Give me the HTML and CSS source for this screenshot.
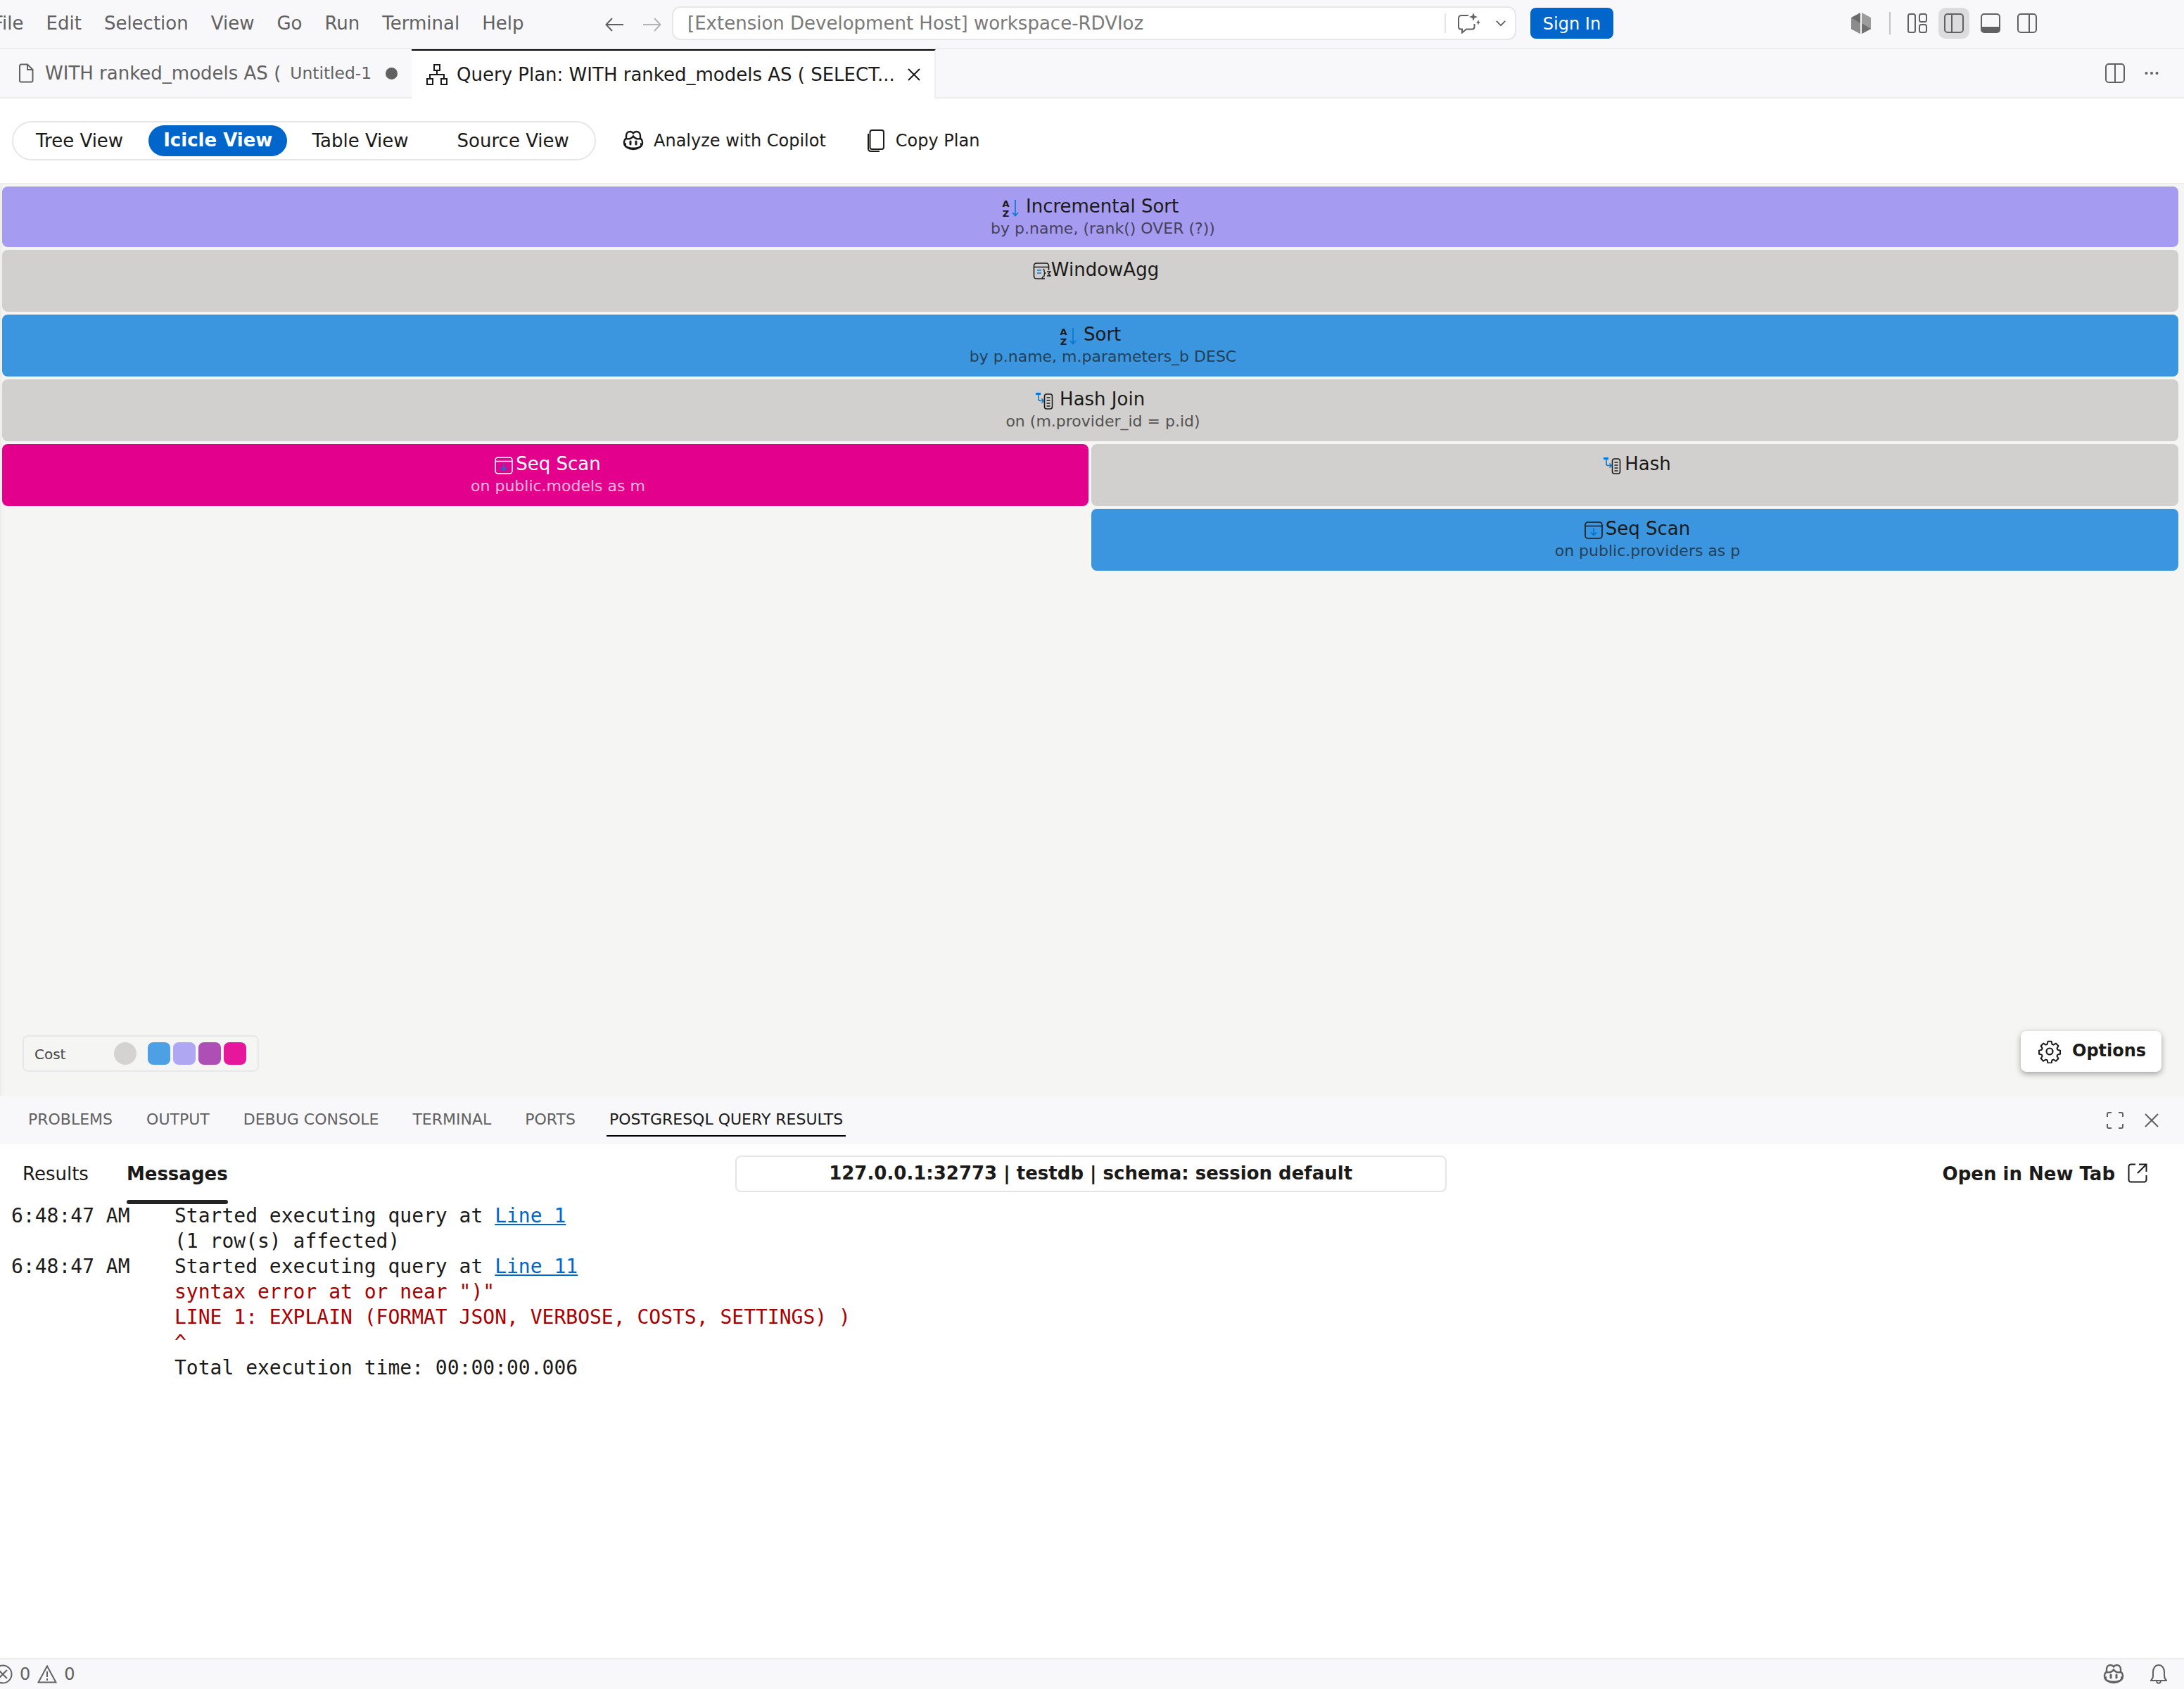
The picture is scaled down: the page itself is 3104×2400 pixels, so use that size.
FILE: index.html
```html
<!DOCTYPE html>
<html lang="en">
<head>
<meta charset="utf-8">
<title>Query Plan</title>
<link rel="stylesheet" href="styles.css">
</head>
<body>
<svg class="defs" width="0" height="0" aria-hidden="true">
  <symbol id="copilot" viewBox="0 0 32 32">
    <path d="M3 19c0-3 1.500-5.500 3-6.500V9c0-3.500 2.500-6 5.500-6 2 0 3.500.8 4.500 2.300C17 3.800 18.500 3 20.500 3 23.500 3 26 5.500 26 9v3.500c1.500 1 3 3.500 3 6.500 0 5.500-6.500 9-13 9S3 24.500 3 19z" fill="none" stroke="currentColor" stroke-width="2.400"/>
    <path d="M6 13c3 .8 7 .6 10-3.500 3 4.100 7 4.300 10 3.500" fill="none" stroke="currentColor" stroke-width="2.400"/>
    <path d="M3 20c0 5 6.500 8 13 8s13-3 13-8l-3-1v4c-3 2-6 2.500-10 2.500S9 25 6 23v-4z" fill="currentColor"/>
    <path d="M12 17v4M20 17v4" stroke="currentColor" stroke-width="3" stroke-linecap="round"/>
  </symbol>
  <symbol id="sort" viewBox="0 0 26 26">
    <text x="5.500" y="11" class="az">A</text>
    <text x="5.500" y="24.500" class="az">Z</text>
    <path d="M19 1v22M15 19l4 4.500 4-4.500" fill="none" stroke="#0078d4" stroke-width="1.600"/>
  </symbol>
  <symbol id="hashicon" viewBox="0 0 26 26">
    <rect x="12.500" y="3" width="11" height="21" rx="3" fill="none" stroke="currentColor" stroke-width="1.600"/>
    <path d="M15.500 8h5M15.500 12h5M15.500 16h5M15.500 20h5" stroke="currentColor" stroke-width="1.500"/>
    <path d="M0 2.500h7" stroke="#0078d4" stroke-width="3"/>
    <path d="M4 4v6c0 1.500 1 2.500 2.500 2.500h5M8.500 9.500l3 3-3 3" fill="none" stroke="#0078d4" stroke-width="1.600"/>
  </symbol>
  <symbol id="scan" viewBox="0 0 26 26">
    <rect x="1" y="1" width="24" height="23" rx="4" fill="none" stroke="currentColor" stroke-width="1.600"/>
    <path d="M1 6.500h24" stroke="currentColor" stroke-width="1.600"/>
    <path d="M13 9.500v10M9 15.500l4 4 4-4" fill="none" stroke="#0078d4" stroke-width="1.800"/>
  </symbol>
  <symbol id="agg" viewBox="0 0 26 26">
    <path d="M17 23H5a3.500 3.500 0 0 1-3.500-3.500v-15A3.500 3.500 0 0 1 5 1h14a3.500 3.500 0 0 1 3.500 3.500V11" fill="none" stroke="currentColor" stroke-width="1.600"/>
    <path d="M1.500 6.500h21" stroke="currentColor" stroke-width="1.600"/>
    <path d="M6 11h6M6 15h6" stroke="#0078d4" stroke-width="1.600"/>
    <path d="M14.500 9.500c2 0 1.500 1.500 1.500 3s.5 2 1.500 2.500c-1 .5-1.500 1-1.500 2.500s.5 3-1.500 3-1 2 0 3" fill="none" stroke="currentColor" stroke-width="1.400"/>
    <path d="M20 13h5l-3 3 3 3h-5" fill="none" stroke="currentColor" stroke-width="1.500"/>
  </symbol>
</svg>

<header class="titlebar">
  <nav class="menu">
    <span class="menu-first">File</span><span>Edit</span><span>Selection</span><span>View</span><span>Go</span><span>Run</span><span>Terminal</span><span>Help</span>
  </nav>
  <div class="nav-arrows">
    <svg class="ic28" viewBox="0 0 28 28"><path d="M26 14H2M10 5l-8.500 9 8.500 9" class="st2"/></svg>
    <svg class="ic28 faint" viewBox="0 0 28 28"><path d="M2 14h24M18 5l8.500 9-8.500 9" class="st2"/></svg>
  </div>
  <div class="command">
    <span class="command-text">[Extension Development Host] workspace-RDVIoz</span>
    <span class="command-sep"></span>
    <svg class="chat" viewBox="0 0 34 30"><path d="M17 4H7C4.800 4 3 5.800 3 8v12c0 2 1.500 3.500 3.500 3.500H8v5l6-5h8c2 0 3.500-1.500 3.500-3.500v-4" class="st2"/><path d="M24 0l1.600 4.400L30 6l-4.400 1.600L24 12l-1.600-4.400L18 6l4.400-1.600zM31 10l1 2.800 2 1-2 1-1 2.800-1-2.800-2-1 2-1z" fill="#616161"/></svg>
    <svg class="chev" viewBox="0 0 18 12"><path d="M2 2l7 7 7-7" class="st2"/></svg>
  </div>
  <button class="signin">Sign In</button>
  <div class="layout-icons">
    <svg class="hex" viewBox="0 0 28 30"><path d="M13 0v30L0 23V7z" fill="#6a6a6a"/><path d="M15 0l13 7v16l-13 7z" fill="#9c9c9c"/><path d="M15 15l13 8-13 7z" fill="#707070"/><path d="M13 15L0 7v16l13 7z" fill="#8c8c8c"/></svg>
    <span class="vsep"></span>
    <svg class="lay" viewBox="0 0 28 28"><rect x="1" y="1" width="10" height="26" rx="2.500" class="st2"/><rect x="17" y="1" width="10" height="11" rx="2.500" class="st2"/><rect x="17" y="16" width="10" height="11" rx="2.500" class="st2"/></svg>
    <span class="lay-active"><svg class="lay" viewBox="0 0 28 28"><rect x="1" y="1" width="26" height="26" rx="4" class="st2"/><path d="M11 1v26" class="st2"/></svg></span>
    <svg class="lay" viewBox="0 0 28 28"><rect x="1" y="1" width="26" height="26" rx="4" class="st2"/><path d="M1 19h26v4a4 4 0 0 1-4 4H5a4 4 0 0 1-4-4z" fill="#616161"/></svg>
    <svg class="lay" viewBox="0 0 28 28"><rect x="1" y="1" width="26" height="26" rx="4" class="st2"/><path d="M17 1v26" class="st2"/></svg>
  </div>
</header>

<div class="tabs">
  <div class="tab">
    <svg class="tab-file" viewBox="0 0 22 28"><path d="M2 3.500A2 2 0 0 1 4 1.500h9l7.500 7.500v15.500a2 2 0 0 1-2 2H4a2 2 0 0 1-2-2zM13 1.500V9h7.500" class="st2"/></svg>
    <span class="tab-name">WITH ranked_models AS (</span>
    <span class="tab-desc">Untitled-1</span>
    <span class="tab-dot"></span>
  </div>
  <div class="tab tab-on">
    <svg class="tab-plan" viewBox="0 0 30 30"><path d="M11 1h8v8h-8zM1 21h8v8H1zM21 21h8v8h-8zM15 9v6M5 21v-6h20v6" class="st2d"/></svg>
    <span class="tab-name">Query Plan: WITH ranked_models AS ( SELECT...</span>
    <svg class="tab-x" viewBox="0 0 20 20"><path d="M2 2l16 16M18 2L2 18" class="st2d"/></svg>
  </div>
  <div class="tab-actions">
    <svg class="lay" viewBox="0 0 28 28"><rect x="1" y="1" width="26" height="26" rx="4" class="st2"/><path d="M14 1v26" class="st2"/></svg>
    <svg class="more" viewBox="0 0 20 6"><circle cx="2.500" cy="3" r="2" fill="#616161"/><circle cx="10" cy="3" r="2" fill="#616161"/><circle cx="17.500" cy="3" r="2" fill="#616161"/></svg>
  </div>
</div>

<section class="toolbar">
  <div class="views">
    <span class="view v-tree">Tree View</span>
    <span class="view v-on">Icicle View</span>
    <span class="view v-table">Table View</span>
    <span class="view v-source">Source View</span>
  </div>
  <span class="tool tool-copilot"><svg class="tool-ic"><use href="#copilot"/></svg>Analyze with Copilot</span>
  <span class="tool tool-copy"><svg class="copy-ic" viewBox="0 0 24 32"><rect x="3.500" y="1" width="19.500" height="27" rx="3" fill="none" stroke="#1b1a19" stroke-width="2"/><path d="M1 6v21c0 2.500 1.500 4 4 4h12" fill="none" stroke="#1b1a19" stroke-width="2"/></svg>Copy Plan</span>
</section>

<main class="plan">
  <div class="rows">
    <div class="node n-purple"><div class="t"><svg class="ni"><use href="#sort"/></svg> Incremental Sort</div><div class="s">by p.name, (rank() OVER (?))</div></div>
    <div class="node n-gray"><div class="t t-agg"><svg class="ni"><use href="#agg"/></svg>WindowAgg</div></div>
    <div class="node n-blue"><div class="t"><svg class="ni"><use href="#sort"/></svg> Sort</div><div class="s">by p.name, m.parameters_b DESC</div></div>
    <div class="node n-gray"><div class="t"><svg class="ni"><use href="#hashicon"/></svg> Hash Join</div><div class="s">on (m.provider_id = p.id)</div></div>
    <div class="split">
      <div class="node n-pink"><div class="t t-tight"><svg class="ni"><use href="#scan"/></svg>Seq Scan</div><div class="s">on public.models as m</div></div>
      <div class="split-col">
        <div class="node n-gray"><div class="t t-tight"><svg class="ni"><use href="#hashicon"/></svg>Hash</div></div>
        <div class="node n-blue"><div class="t t-tight"><svg class="ni"><use href="#scan"/></svg>Seq Scan</div><div class="s">on public.providers as p</div></div>
      </div>
    </div>
  </div>
  <div class="plan-foot">
    <div class="legend">
      <span class="legend-label">Cost</span>
      <span class="sw sw-gray"></span>
      <span class="sw-group"><span class="sw sw-blue"></span><span class="sw sw-lav"></span><span class="sw sw-pur"></span><span class="sw sw-pink"></span></span>
    </div>
    <button class="options">
      <svg class="gear" viewBox="0 0 32 34"><path d="M13.200 1.500h5.600l.9 4.300 2.300 1 3.800-2.300 3.900 4-2.300 3.700 1 2.300 4.100 1v5.600l-4.100 1-1 2.300 2.300 3.700-3.900 4-3.800-2.300-2.300 1-.9 4.300h-5.600l-.9-4.300-2.300-1-3.800 2.300-3.900-4 2.300-3.700-1-2.300-4.100-1V15.500l4.100-1 1-2.300-2.300-3.700 3.900-4 3.800 2.300 2.300-1z" transform="translate(1.500 1.500) scale(.91)" fill="none" stroke="#1b1a19" stroke-width="2.200" stroke-linejoin="round"/><circle cx="16" cy="17" r="4.500" fill="none" stroke="#1b1a19" stroke-width="2.200"/></svg>
      <span class="options-label">Options</span>
    </button>
  </div>
</main>

<section class="panel">
  <div class="panel-head">
    <span class="ptab">PROBLEMS</span>
    <span class="ptab">OUTPUT</span>
    <span class="ptab">DEBUG CONSOLE</span>
    <span class="ptab">TERMINAL</span>
    <span class="ptab">PORTS</span>
    <span class="ptab ptab-on">POSTGRESQL QUERY RESULTS</span>
    <span class="panel-actions">
      <svg class="p-ic" viewBox="0 0 24 24"><path d="M1 7V3a2 2 0 0 1 2-2h4M17 1h4a2 2 0 0 1 2 2v4M23 17v4a2 2 0 0 1-2 2h-4M7 23H3a2 2 0 0 1-2-2v-4" class="st2"/></svg>
      <svg class="p-x" viewBox="0 0 20 20"><path d="M1 1l18 18M19 1L1 19" class="st2"/></svg>
    </span>
  </div>
  <div class="results-head">
    <span class="rtab">Results</span>
    <span class="rtab rtab-on">Messages</span>
    <span class="conn">127.0.0.1:32773 | testdb | schema: session default</span>
    <span class="newtab">Open in New Tab
      <svg class="ext" viewBox="0 0 28 28"><path d="M11 1.500H4.500a3 3 0 0 0-3 3v19a3 3 0 0 0 3 3h19a3 3 0 0 0 3-3V17M16 1.500h10.500V12M26.500 1.500L14 14" fill="none" stroke="#1b1a19" stroke-width="2"/></svg>
    </span>
  </div>
  <div class="msgs">
    <div class="msg"><span class="time">6:48:47 AM</span><span>Started executing query at <a class="lnk">Line 1</a></span></div>
    <div class="msg"><span class="time"></span><span>(1 row(s) affected)</span></div>
    <div class="msg"><span class="time">6:48:47 AM</span><span>Started executing query at <a class="lnk">Line 11</a></span></div>
    <div class="msg err"><span class="time"></span><span>syntax error at or near ")"</span></div>
    <div class="msg err"><span class="time"></span><span>LINE 1: EXPLAIN (FORMAT JSON, VERBOSE, COSTS, SETTINGS) )</span></div>
    <div class="msg err"><span class="time"></span><span>^</span></div>
    <div class="msg"><span class="time"></span><span>Total execution time: 00:00:00.006</span></div>
  </div>
</section>

<footer class="status">
  <svg class="st-err" viewBox="0 0 28 28"><circle cx="14" cy="14" r="12.500" class="st2"/><path d="M8 8l12 12M20 8L8 20" class="st2"/></svg>
  <span class="st-n">0</span>
  <svg class="st-warn" viewBox="0 0 28 26"><path d="M14 1.500L1.500 24.500h25zM14 9v8M14 19v3" class="st2"/></svg>
  <span class="st-n">0</span>
  <span class="status-right">
    <svg class="st-copilot"><use href="#copilot"/></svg>
    <svg class="st-bell" viewBox="0 0 24 28"><path d="M1 23c2-2 3-3.500 3-7v-5C4 5 7.500 1 12 1s8 4 8 10v5c0 3.500 1 5 3 7zM9 23c0 5 6 5 6 0" class="st2"/></svg>
  </span>
</footer>
</body>
</html>
```
FILE: styles.css
```css
* { box-sizing: border-box; }
html, body { margin: 0; padding: 0; }
body {
  width: 3104px;
  height: 2400px;
  display: flex;
  flex-direction: column;
  overflow: hidden;
  font-family: "DejaVu Sans", sans-serif;
  font-size: 26px;
  color: #1b1a19;
  background: #fff;
}
.defs { position: absolute; }
svg { flex: none; display: block; }
.st2 { fill: none; stroke: #616161; stroke-width: 2; }
.st2d { fill: none; stroke: #1b1a19; stroke-width: 2; }
.az { font: 700 13px "DejaVu Sans", sans-serif; fill: #1b1a19; text-anchor: middle; }

/* title bar */
.titlebar {
  flex: none;
  height: 70px;
  display: flex;
  align-items: center;
  background: #f8f8fb;
  border-bottom: 2px solid #eeeeef;
  overflow: hidden;
  padding-bottom: 2px;
}
.menu { width: 870px; flex: none; display: flex; gap: 32px; color: #616161; font-size: 26px; white-space: nowrap; margin-left: -10px; }
.nav-arrows { display: flex; gap: 24px; width: 95px; margin-top: 4px; }
.ic28 { width: 28px; height: 28px; }
.faint { opacity: .45; }
.command {
  flex: none;
  width: 1200px;
  height: 48px;
  background: #fff;
  border: 2px solid #e7e7e7;
  border-radius: 12px;
  display: flex;
  align-items: center;
  padding-left: 20px;
}
.command-text { flex: 1; color: #7a7a7a; white-space: nowrap; }
.command-sep { width: 2px; height: 28px; background: #e5e5e5; }
.chat { width: 34px; height: 30px; margin-left: 15px; }
.chev { width: 16px; height: 11px; margin-left: 21px; margin-right: 12px; }
.signin {
  flex: none;
  margin-left: 20px;
  width: 118px;
  height: 44px;
  border: 0;
  border-radius: 8px;
  background: #0066cc;
  color: #fff;
  font: 400 24px "DejaVu Sans", sans-serif;
  padding: 2px 0 0;
}
.layout-icons { margin-left: 338px; display: flex; align-items: center; }
.hex { width: 28px; height: 30px; }
.vsep { width: 2px; height: 32px; background: #c4c4c4; margin: 0 24px 0 26px; }
.lay { width: 28px; height: 28px; }
.lay-active { width: 44px; height: 44px; background: #dcdcde; border-radius: 10px; display: flex; align-items: center; justify-content: center; margin: 0 16px; }
.layout-icons > .lay:last-child { margin-left: 24px; }

/* tabs */
.tabs {
  flex: none;
  height: 70px;
  display: flex;
  background: #f8f8fb;
  border-bottom: 2px solid #eeeeef;
}
.tab { height: 68px; display: flex; align-items: center; white-space: nowrap; color: #616161; font-size: 26px; }
.tab:first-child { width: 585px; padding-left: 26px; }
.tab-file { width: 22px; height: 28px; }
.tab-name { margin-left: 16px; }
.tab-desc { font-size: 23.400px; margin-left: 13px; }
.tab-dot { width: 17px; height: 17px; border-radius: 50%; background: #616161; margin-left: 20px; }
.tab-on {
  width: 745px;
  height: 70px;
  margin-bottom: -2px;
  background: #fff;
  color: #1b1a19;
  border-top: 2px solid #000;
  border-right: 2px solid #eeeeef;
  padding-left: 21px;
}
.tab-plan { width: 30px; height: 30px; }
.tab-on .tab-name { margin-left: 13px; }
.tab-x { width: 20px; height: 20px; margin-left: 17px; }
.tab-actions { margin-left: auto; display: flex; align-items: center; gap: 28px; padding-right: 36px; }
.more { width: 20px; height: 6px; }

/* toolbar */
.toolbar { flex: none; height: 120px; display: flex; align-items: center; padding-left: 17px; background: #fff; font-size: 24px; }
.views {
  width: 830px;
  height: 56px;
  border: 2px solid #e6e6e6;
  border-radius: 28px;
  display: flex;
  align-items: center;
  white-space: nowrap;
}
.view { font-size: 26px; }
.v-tree { margin-left: 32px; }
.v-on { margin-left: 36px; padding: 0 21px; height: 44px; line-height: 42px; background: #0066cc; color: #fff; font-weight: 700; border-radius: 22px; }
.v-table { margin-left: 35px; }
.v-source { margin-left: 69px; }
.tool { display: flex; align-items: center; white-space: nowrap; }
.tool-copilot { margin-left: 37px; }
.tool-ic { width: 32px; height: 32px; margin-right: 13px; color: #1b1a19; }
.tool-copy { margin-left: 59px; }
.copy-ic { width: 24px; height: 32px; margin-right: 16px; }

/* plan */
.plan {
  flex: 1;
  min-height: 0;
  background: #f5f5f3;
  border-top: 2px solid #eeeeee;
  display: flex;
  flex-direction: column;
  box-shadow: inset 6px 0 6px -6px #e4e4e4;
}
.rows { display: flex; flex-direction: column; gap: 4px; padding: 3px 8px 0 3px; }
.node {
  height: 88px;
  border-radius: 8px;
  text-align: center;
  padding-top: 11px;
  line-height: 34px;
  font-size: 26px;
  overflow: hidden;
}
.rows > .node:first-child { height: 86px; }
.t { display: flex; justify-content: center; align-items: center; height: 34px; white-space: pre; }
.t-agg { padding-left: 16px; }
.t-tight { padding-left: 7px; }
.t-tight .ni { margin-right: 4px; }
.ni { width: 26px; height: 26px; margin-top: 5px; }
.s { font-size: 22px; line-height: 28px; margin-top: 1px; padding-left: 36px; opacity: .7; }
.n-purple { background: #a59bf0; }
.n-gray { background: #d1d0ce; }
.n-blue { background: #3b96df; }
.n-pink { background: #e3008c; color: #fff; }
.split { display: grid; grid-template-columns: 1544px 1fr; gap: 4px; }
.split-col { display: flex; flex-direction: column; gap: 4px; }
.split > .node { align-self: start; }
.plan-foot { margin-top: auto; display: flex; align-items: flex-end; justify-content: space-between; padding: 0 32px 34px 32px; }
.legend {
  width: 336px;
  height: 52px;
  border: 2px solid #e8e8ea;
  border-radius: 8px;
  background: #f5f5f3;
  display: flex;
  align-items: center;
  font-size: 20px;
  padding-left: 15px;
}
.legend-label { width: 113px; color: #444; padding-top: 2px; }
.sw { width: 32px; height: 32px; border-radius: 8px; display: block; }
.sw-gray { background: #d4d3d1; border-radius: 50%; }
.sw-group { display: flex; gap: 4px; margin-left: 16px; }
.sw-blue { background: #4ea0e4; }
.sw-lav { background: #b0a7f3; }
.sw-pur { background: #ad4fb5; }
.sw-pink { background: #e6179a; }
.options {
  width: 200px;
  height: 58px;
  border: 0;
  border-radius: 8px;
  background: #fff;
  box-shadow: 0 3px 8px rgba(0, 0, 0, .35);
  display: flex;
  align-items: center;
  padding: 0 0 0 25px;
  font: 700 24px "DejaVu Sans", sans-serif;
  color: #1b1a19;
  gap: 16px;
}
.options-label { margin-bottom: 3px; }
.gear { width: 32px; height: 34px; }

/* panel */
.panel { flex: none; height: 799px; display: flex; flex-direction: column; background: #fff; }
.panel-head {
  flex: none;
  height: 69px;
  background: #f8f8fb;
  display: flex;
  align-items: flex-start;
  padding-left: 36px;
  font-size: 22px;
  color: #616161;
  gap: 40px;
}
.ptab { height: 58px; padding: 20px 4px 0; line-height: 28px; white-space: nowrap; }
.ptab-on { color: #1b1a19; border-bottom: 2px solid #000; }
.panel-actions { margin-left: auto; display: flex; align-items: center; gap: 30px; padding: 23px 36px 0 0; }
.p-ic { width: 24px; height: 24px; }
.p-x { width: 20px; height: 20px; }
.results-head { flex: none; height: 84px; display: flex; align-items: flex-start; }
.rtab { margin-top: 26px; line-height: 32px; }
.rtab:first-child { margin-left: 32px; }
.rtab-on { margin-left: 54px; font-weight: 700; height: 58px; position: relative; }
.rtab-on::after { content: ""; position: absolute; left: 0; right: 0; bottom: -1px; height: 6px; border-radius: 3px; background: #242424; }
.conn {
  width: 1011px;
  height: 52px;
  margin: 16px 0 0 721px;
  border: 2px solid #e5e5e5;
  border-radius: 8px;
  text-align: center;
  line-height: 46px;
  font-weight: 700;
}
.newtab { margin-left: auto; padding: 26px 52px 0 0; display: flex; align-items: center; font-weight: 700; gap: 18px; line-height: 32px; }
.ext { width: 28px; height: 28px; margin-top: -3px; }
.msgs { flex: 1; padding: 0 0 0 16px; font-family: "DejaVu Sans Mono", monospace; font-size: 28px; line-height: 36px; }
.msg { display: flex; height: 36px; white-space: pre; }
.time { width: 232px; flex: none; }
.lnk { color: #0066cc; text-decoration: underline; }
.err { color: #a80000; }

/* status bar */
.status {
  flex: none;
  height: 44px;
  background: #f8f8fb;
  border-top: 2px solid #eeeeef;
  display: flex;
  align-items: center;
  color: #616161;
  font-size: 24px;
}
.st-err { width: 28px; height: 28px; margin-left: -10px; }
.st-n { margin-left: 10px; }
.st-warn { width: 28px; height: 26px; margin-left: 10px; }
.status-right { margin-left: auto; display: flex; align-items: center; gap: 36px; padding-right: 24px; color: #616161; }
.st-copilot { width: 32px; height: 32px; }
.st-bell { width: 24px; height: 28px; }
```
